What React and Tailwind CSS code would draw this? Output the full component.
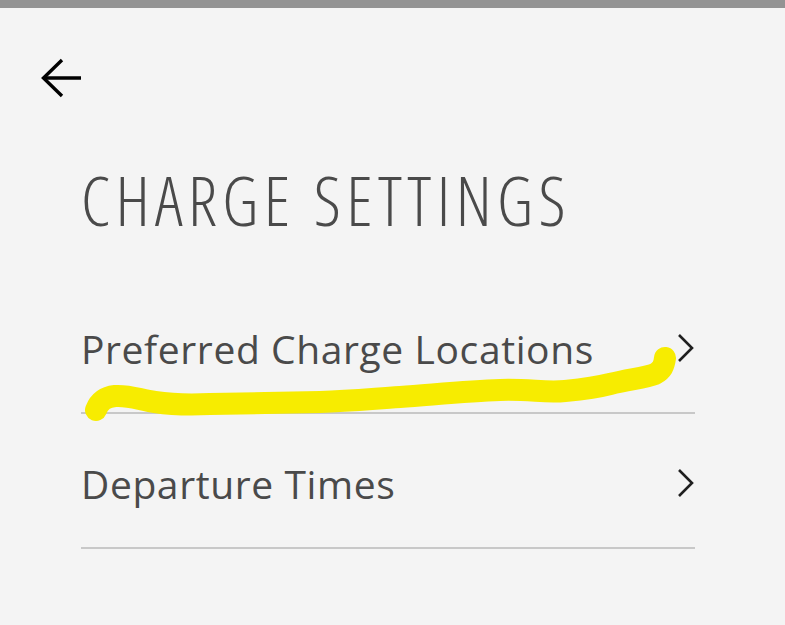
import React from 'react';

const rows = ['Preferred Charge Locations', 'Departure Times'];

const Chevron = () => (
  <svg width="18" height="30" viewBox="0 0 18 30" className="shrink-0">
    <polyline points="2,2 15,15 2,28" fill="none" stroke="#1f1f1f" strokeWidth="2.6" />
  </svg>
);

const App = () => {
  return (
    <div className="relative w-[785px] h-[625px] overflow-hidden bg-[#f4f4f4] font-['Open_Sans',sans-serif]">
      <div className="h-[8px] bg-[#939393]" />

      {/* back arrow */}
      <div className="pl-[40px] pt-[50px]">
        <svg width="42" height="40" viewBox="0 0 42 40">
          <path d="M41 20 H4" stroke="#000" strokeWidth="3.4" fill="none" />
          <path d="M22 2 L3.5 20 L22 38" stroke="#000" strokeWidth="3.4" fill="none" />
        </svg>
      </div>

      <div className="ml-[81px] mr-[90px]">
        <h1 className="mt-[68px] text-[68px] leading-none font-light text-[#4a4a4a] font-stretch-condensed tracking-[5.4px]">
          CHARGE SETTINGS
        </h1>

        <div className="mt-[45px]">
          {rows.map((label) => (
            <div key={label} className="flex h-[135px] items-center justify-between border-b-2 border-[#c8c8c8] pt-[5px]">
              <span className="text-[39px] text-[#4a4a4a] leading-none tracking-[0.6px]">{label}</span>
              <Chevron />
            </div>
          ))}
        </div>
      </div>

      {/* yellow marker scribble */}
      <svg className="pointer-events-none absolute left-0 top-0" width="785" height="625" viewBox="0 0 785 625">
        <path
          d="M96 410 C100 400 106 397 115 396 C130 395 140 400 155 402 C175 405 190 405 210 404 C250 403 280 403 320 402 C350 401 370 399 400 397 C440 394 470 391 500 390 C530 389 545 393 565 391 C585 389 595 388 610 384 C630 379 645 378 655 374 C662 370 664 366 665 358"
          fill="none"
          stroke="#f7ec00"
          strokeWidth="22"
          strokeLinecap="round"
          strokeLinejoin="round"
        />
      </svg>
    </div>
  );
};

export default App;
